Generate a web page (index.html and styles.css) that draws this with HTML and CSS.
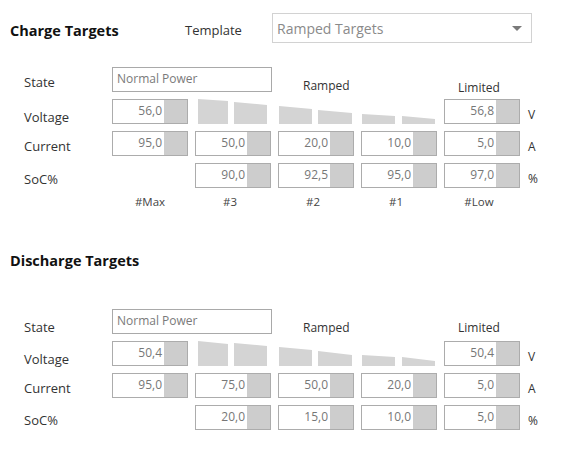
FILE: index.html
```html
<!DOCTYPE html>
<html lang="en">
<head>
    <meta charset="UTF-8">
    <title>Targets</title>
    <link rel="stylesheet" href="styles.css">
</head>
<body>
    <section class="targets">
        <div class="head">
            <h2>Charge Targets</h2>
            <span class="tpl-label">Template</span>
            <div class="select">
                <span>Ramped Targets</span>
                <svg class="caret" width="10" height="5" viewBox="0 0 10 5"><polygon points="0,0 10,0 5,5" fill="#7a7a7a"/></svg>
            </div>
        </div>
        <div class="grid">
            <span class="lbl">State</span>
            <div class="state">Normal Power</div>
            <span class="hdr ramped">Ramped</span>
            <span class="hdr limited">Limited</span>

            <span class="lbl volt">Voltage</span>
            <div class="box"><span class="val">56,0</span><span class="spin"></span></div>
            <svg class="ramp" width="242" height="25" viewBox="0 0 242 25">
                <polygon points="3,0 33,2 33,25 3,25"/>
                <polygon points="39,3 72,6 72,25 39,25"/>
                <polygon points="84,7 117,10 117,25 84,25"/>
                <polygon points="123,11 157,14 157,25 123,25"/>
                <polygon points="167,15 200,17 200,25 167,25"/>
                <polygon points="207,17 240,20 240,25 207,25"/>
            </svg>
            <div class="box last"><span class="val">56,8</span><span class="spin"></span></div>
            <span class="unit">V</span>

            <span class="lbl">Current</span>
            <div class="box"><span class="val">95,0</span><span class="spin"></span></div>
            <div class="box"><span class="val">50,0</span><span class="spin"></span></div>
            <div class="box"><span class="val">20,0</span><span class="spin"></span></div>
            <div class="box"><span class="val">10,0</span><span class="spin"></span></div>
            <div class="box"><span class="val">5,0</span><span class="spin"></span></div>
            <span class="unit">A</span>

            <span class="lbl soc">SoC%</span>
            <div class="box skip"><span class="val">90,0</span><span class="spin"></span></div>
            <div class="box"><span class="val">92,5</span><span class="spin"></span></div>
            <div class="box"><span class="val">95,0</span><span class="spin"></span></div>
            <div class="box"><span class="val">97,0</span><span class="spin"></span></div>
            <span class="unit">%</span>

            <span class="col first">#Max</span>
            <span class="col">#3</span>
            <span class="col">#2</span>
            <span class="col">#1</span>
            <span class="col">#Low</span>
        </div>
    </section>

    <section class="targets discharge">
        <div class="head">
            <h2>Discharge Targets</h2>
        </div>
        <div class="grid">
            <span class="lbl state-lbl">State</span>
            <div class="state">Normal Power</div>
            <span class="hdr ramped">Ramped</span>
            <span class="hdr limited">Limited</span>

            <span class="lbl volt">Voltage</span>
            <div class="box"><span class="val">50,4</span><span class="spin"></span></div>
            <svg class="ramp" width="242" height="25" viewBox="0 0 242 25">
                <polygon points="3,0 33,3 33,25 3,25"/>
                <polygon points="39,2 72,5 72,25 39,25"/>
                <polygon points="84,6 117,9 117,25 84,25"/>
                <polygon points="123,10 157,14 157,25 123,25"/>
                <polygon points="167,14 200,16 200,25 167,25"/>
                <polygon points="207,16 240,20 240,25 207,25"/>
            </svg>
            <div class="box last"><span class="val">50,4</span><span class="spin"></span></div>
            <span class="unit">V</span>

            <span class="lbl">Current</span>
            <div class="box"><span class="val">95,0</span><span class="spin"></span></div>
            <div class="box"><span class="val">75,0</span><span class="spin"></span></div>
            <div class="box"><span class="val">50,0</span><span class="spin"></span></div>
            <div class="box"><span class="val">20,0</span><span class="spin"></span></div>
            <div class="box"><span class="val">5,0</span><span class="spin"></span></div>
            <span class="unit">A</span>

            <span class="lbl">SoC%</span>
            <div class="box skip"><span class="val">20,0</span><span class="spin"></span></div>
            <div class="box"><span class="val">15,0</span><span class="spin"></span></div>
            <div class="box"><span class="val">10,0</span><span class="spin"></span></div>
            <div class="box"><span class="val">5,0</span><span class="spin"></span></div>
            <span class="unit">%</span>
        </div>
    </section>
</body>
</html>
```

FILE: styles.css
```css
body {
    margin: 0;
    background: #ffffff;
    font-family: "Open Sans", "Noto Sans", sans-serif;
    color: #333333;
}

.targets {
    padding-top: 13px;
}

.head {
    display: flex;
    align-items: center;
    height: 30px;
    padding-left: 10px;
}
.head h2 {
    margin: 0;
    width: 175px;
    padding-top: 5px;
    font-size: 14.5px;
    font-weight: 700;
    color: #111111;
}
.tpl-label {
    width: 87px;
    padding-top: 4px;
    font-size: 13px;
}
.select {
    display: flex;
    align-items: center;
    justify-content: space-between;
    box-sizing: border-box;
    width: 260px;
    height: 30px;
    padding: 1px 9px 0 4px;
    border: 1px solid #d2d2d2;
    font-size: 14px;
    color: #8a8a8a;
}

.grid {
    display: grid;
    grid-template-columns: 81px repeat(5, 76px) 24px;
    grid-auto-rows: 25px;
    column-gap: 7px;
    row-gap: 7px;
    margin-top: 24px;
    padding-left: 24px;
    font-size: 13px;
}

.lbl {
    grid-column: 1;
    padding-top: 6px;
    line-height: 18px;
}
.lbl.volt {
    padding-top: 9px;
}
.lbl.soc {
    padding-top: 7px;
}
.lbl.state-lbl {
    padding-top: 9px;
}
.state {
    grid-column: 2 / 4;
    box-sizing: border-box;
    margin-right: -1px;
    padding-left: 4px;
    border: 1px solid #a9a9a9;
    line-height: 22px;
    font-size: 12px;
    color: #7a7a7a;
}
.hdr {
    padding-top: 10px;
    line-height: 18px;
    font-size: 12px;
}
.ramped {
    grid-column: 4;
    padding-left: 25px;
}
.limited {
    grid-column: 6;
    padding-top: 12px;
    padding-left: 14px;
}

.box {
    display: flex;
    box-sizing: border-box;
    border: 1px solid #acacac;
    background: #ffffff;
}
.box .val {
    flex: 1;
    padding-right: 2px;
    text-align: right;
    line-height: 21px;
    font-size: 12px;
    color: #777777;
}
.box .spin {
    width: 23px;
    background: #cdcdcd;
}
.box.skip {
    grid-column: 3;
}
.box.last {
    grid-column: 6;
}

.ramp {
    grid-column: 3 / 6;
    fill: #d4d4d4;
}

.unit {
    padding-top: 7px;
    padding-left: 1px;
    line-height: 18px;
    font-size: 12px;
}

.col {
    text-align: center;
    padding-right: 6px;
    line-height: 14px;
    font-size: 11.5px;
    color: #444444;
}
.col.first {
    grid-column: 2;
    padding-right: 0;
}

.discharge {
    padding-top: 23px;
}
.discharge .limited {
    padding-top: 10px;
}
.discharge .grid {
    margin-top: 36px;
}
```
